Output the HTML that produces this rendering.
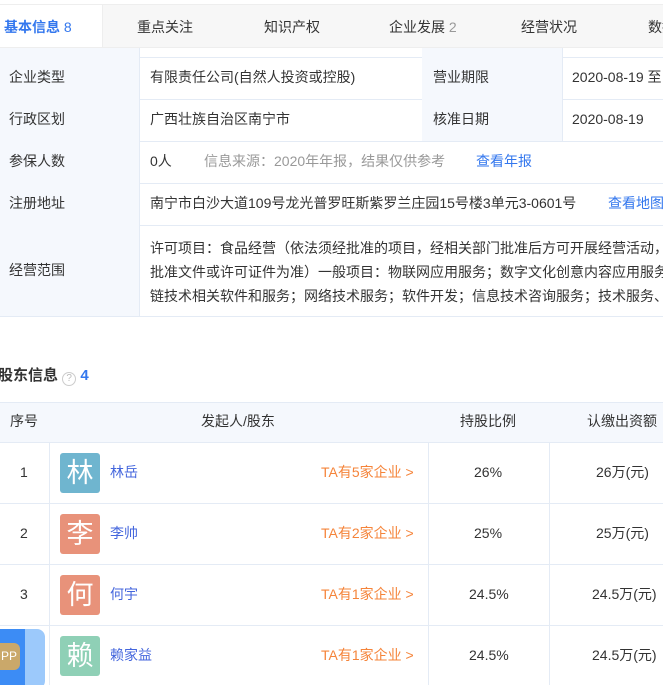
<!DOCTYPE html><html><head><meta charset="utf-8"><style>
*{margin:0;padding:0;box-sizing:border-box}
html,body{overflow:hidden}
body{width:663px;height:685px;background:#fff;position:relative;font-family:"Liberation Sans","Noto Sans CJK SC",sans-serif;font-size:14px;line-height:16px;color:#333}
.tabs{position:absolute;left:0;top:4px;width:663px;height:44px;background:#f7f7f7;border-top:1px solid #eee;border-bottom:1px solid #eee;overflow:hidden}
.tab{position:absolute;top:13px;font-size:14px;line-height:18px;color:#333;white-space:nowrap}
.cell{position:absolute;border-right:1px solid #e4ebf5;border-bottom:1px solid #e4ebf5}
.lb{background:#f5f8fd}
.t{position:absolute;white-space:nowrap}
.av{position:absolute;left:60px;width:40px;height:40px;border-radius:3px;color:#fff;font-size:27px;text-align:center;line-height:40px}
.nm{position:absolute;left:110px;color:#4466dd;white-space:nowrap}
.ta{position:absolute;left:321px;color:#f5843a;white-space:nowrap}
#wrap{position:absolute;left:0;top:0;width:663px;height:685px;overflow:hidden}
</style></head><body><div id="wrap">
<div class="tabs">
<div style="position:absolute;left:0;top:-1px;width:103px;height:44px;background:#fff;border-right:1px solid #eee"></div>
<div class="tab" style="left:4px;color:#3377ee;font-weight:bold">基本信息 <span style="font-weight:normal">8</span></div>
<div class="tab" style="left:137px">重点关注</div>
<div class="tab" style="left:264px">知识产权</div>
<div class="tab" style="left:389px">企业发展 <span style="color:#999">2</span></div>
<div class="tab" style="left:521px">经营状况</div>
<div class="tab" style="left:648px">数据</div>
</div>
<div class="cell lb" style="left:0;top:48px;width:140px;height:10px"></div>
<div class="cell" style="left:139px;top:48px;width:284px;height:10px"></div>
<div class="cell lb" style="left:422px;top:48px;width:141px;height:10px"></div>
<div class="cell" style="left:562px;top:48px;width:110px;height:10px"></div>

<div class="cell lb" style="left:0;top:57px;width:140px;height:43px"></div>
<div class="cell" style="left:139px;top:57px;width:284px;height:43px"></div>
<div class="cell lb" style="left:422px;top:57px;width:141px;height:43px"></div>
<div class="cell" style="left:562px;top:57px;width:110px;height:43px"></div>
<div class="t" style="left:9px;top:69px">企业类型</div>
<div class="t" style="left:150px;top:69px">有限责任公司(自然人投资或控股)</div>
<div class="t" style="left:433px;top:69px">营业期限</div>
<div class="t" style="left:572px;top:69px">2020-08-19 至 无固定期限</div>

<div class="cell lb" style="left:0;top:99px;width:140px;height:43px"></div>
<div class="cell" style="left:139px;top:99px;width:284px;height:43px"></div>
<div class="cell lb" style="left:422px;top:99px;width:141px;height:43px"></div>
<div class="cell" style="left:562px;top:99px;width:110px;height:43px"></div>
<div class="t" style="left:9px;top:111px">行政区划</div>
<div class="t" style="left:150px;top:111px">广西壮族自治区南宁市</div>
<div class="t" style="left:433px;top:111px">核准日期</div>
<div class="t" style="left:572px;top:111px">2020-08-19</div>

<div class="cell lb" style="left:0;top:141px;width:140px;height:43px"></div>
<div class="cell" style="left:139px;top:141px;width:533px;height:43px"></div>
<div class="t" style="left:9px;top:153px">参保人数</div>
<div class="t" style="left:150px;top:153px">0人</div>
<div class="t" style="left:204px;top:153px;color:#999">信息来源：2020年年报，结果仅供参考</div>
<div class="t" style="left:476px;top:153px;color:#3377ee">查看年报</div>

<div class="cell lb" style="left:0;top:183px;width:140px;height:43px"></div>
<div class="cell" style="left:139px;top:183px;width:533px;height:43px"></div>
<div class="t" style="left:9px;top:195px">注册地址</div>
<div class="t" style="left:150px;top:195px">南宁市白沙大道109号龙光普罗旺斯紫罗兰庄园15号楼3单元3-0601号</div>
<div class="t" style="left:608px;top:195px;color:#3377ee">查看地图</div>

<div class="cell lb" style="left:0;top:225px;width:140px;height:92px"></div>
<div class="cell" style="left:139px;top:225px;width:533px;height:92px"></div>
<div class="t" style="left:9px;top:262px">经营范围</div>
<div class="t" style="left:150px;top:236px;line-height:24px">许可项目：食品经营（依法须经批准的项目，经相关部门批准后方可开展经营活动，具体经营项目以相关部门<br>批准文件或许可证件为准）一般项目：物联网应用服务；数字文化创意内容应用服务；区块<br>链技术相关软件和服务；网络技术服务；软件开发；信息技术咨询服务；技术服务、技术开发</div>

<div class="t" style="left:-2px;top:367px;font-size:15px;line-height:18px;font-weight:bold">股东信息 <span style="display:inline-block;width:14px;height:14px;border:1px solid #ccc;border-radius:50%;font-size:10px;color:#bbb;text-align:center;line-height:12px;font-weight:normal;vertical-align:-1px">?</span> <span style="color:#3377ee">4</span></div>

<div class="cell lb" style="left:0;top:402px;width:50px;height:41px;border-top:1px solid #e4ebf5"></div>
<div class="cell lb" style="left:49px;top:402px;width:380px;height:41px;border-top:1px solid #e4ebf5"></div>
<div class="cell lb" style="left:428px;top:402px;width:122px;height:41px;border-top:1px solid #e4ebf5"></div>
<div class="cell lb" style="left:549px;top:402px;width:130px;height:41px;border-top:1px solid #e4ebf5"></div>
<div class="t" style="left:10px;top:413px">序号</div>
<div class="t" style="left:201px;top:413px">发起人/股东</div>
<div class="t" style="left:460px;top:413px">持股比例</div>
<div class="t" style="left:587px;top:413px">认缴出资额</div>

<div class="cell" style="left:0;top:442px;width:50px;height:62px"></div><div class="cell" style="left:49px;top:442px;width:380px;height:62px"></div><div class="cell" style="left:428px;top:442px;width:122px;height:62px"></div><div class="cell" style="left:549px;top:442px;width:130px;height:62px"></div>
<div class="cell" style="left:0;top:503px;width:50px;height:62px"></div><div class="cell" style="left:49px;top:503px;width:380px;height:62px"></div><div class="cell" style="left:428px;top:503px;width:122px;height:62px"></div><div class="cell" style="left:549px;top:503px;width:130px;height:62px"></div>
<div class="cell" style="left:0;top:564px;width:50px;height:62px"></div><div class="cell" style="left:49px;top:564px;width:380px;height:62px"></div><div class="cell" style="left:428px;top:564px;width:122px;height:62px"></div><div class="cell" style="left:549px;top:564px;width:130px;height:62px"></div>
<div class="cell" style="left:0;top:625px;width:50px;height:62px"></div><div class="cell" style="left:49px;top:625px;width:380px;height:62px"></div><div class="cell" style="left:428px;top:625px;width:122px;height:62px"></div><div class="cell" style="left:549px;top:625px;width:130px;height:62px"></div>

<div class="t" style="left:20px;top:464px">1</div>
<div class="av" style="top:453px;background:#6fb5cf">林</div><div class="nm" style="top:464px">林岳</div><div class="ta" style="top:464px">TA有5家企业 &gt;</div>
<div class="t" style="left:474px;top:464px">26%</div><div class="t" style="left:596px;top:464px">26万(元)</div>

<div class="t" style="left:20px;top:525px">2</div>
<div class="av" style="top:514px;background:#e8927a">李</div><div class="nm" style="top:525px">李帅</div><div class="ta" style="top:525px">TA有2家企业 &gt;</div>
<div class="t" style="left:474px;top:525px">25%</div><div class="t" style="left:596px;top:525px">25万(元)</div>

<div class="t" style="left:20px;top:586px">3</div>
<div class="av" style="top:575px;background:#e8927a">何</div><div class="nm" style="top:586px">何宇</div><div class="ta" style="top:586px">TA有1家企业 &gt;</div>
<div class="t" style="left:469px;top:586px">24.5%</div><div class="t" style="left:592px;top:586px">24.5万(元)</div>

<div class="av" style="top:636px;background:#8fd0b6">赖</div><div class="nm" style="top:647px">赖家益</div><div class="ta" style="top:647px">TA有1家企业 &gt;</div>
<div class="t" style="left:469px;top:647px">24.5%</div><div class="t" style="left:592px;top:647px">24.5万(元)</div>

<div style="position:absolute;left:-10px;top:629px;width:55px;height:60px;background:#9cc9fb;border-radius:8px"></div>
<div style="position:absolute;left:-10px;top:629px;width:35px;height:60px;background:#3c8cf5;border-radius:8px 0 0 8px"></div>
<div style="position:absolute;left:-10px;top:643px;width:30px;height:27px;background:#caa86a;border-radius:6px;color:#fff;font-size:12px;line-height:27px;text-align:right;padding-right:3px">PP</div>
</div></body></html>
